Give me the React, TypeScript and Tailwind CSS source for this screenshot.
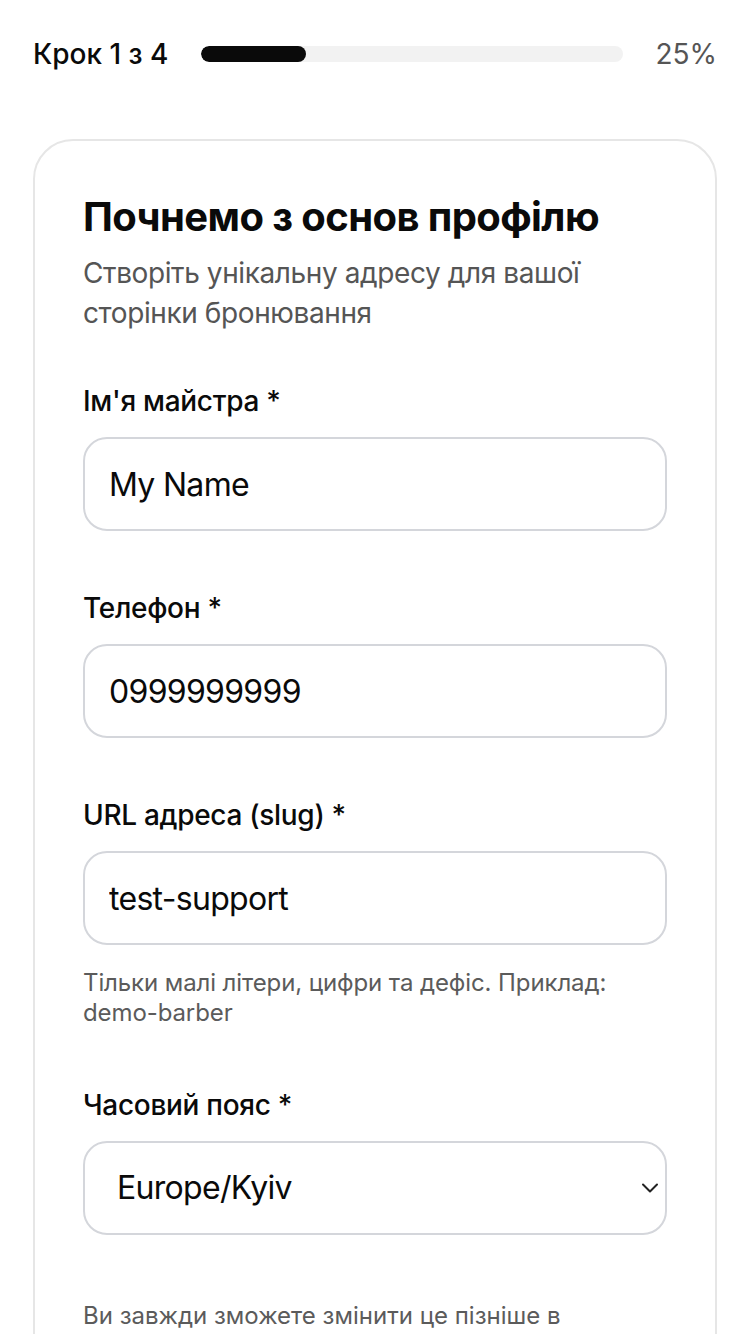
import React from 'react';

const labelCls = "block text-[28px] leading-[40px] font-medium text-[#0a0a0a] tracking-[-0.3px]";
const inputCls = "mt-[16px] block w-full h-[94px] rounded-[24px] border-2 border-[#d4d6db] bg-white px-[24px] text-[32px] text-[#0a0a0a] tracking-[-0.7px] outline-none";

function Field({ label, value, hint }: { label: string; value: string; hint?: string }) {
  return (
    <div>
      <label className={labelCls}>{label}</label>
      <input type="text" value={value} readOnly className={inputCls} />
      {hint && (
        <p className="mt-[23px] text-[24px] leading-[30px] text-[#5b5b5b] tracking-[-0.1px]">{hint}</p>
      )}
    </div>
  );
}

export default function App() {
  return (
    <div className="min-h-screen bg-white font-['Inter',sans-serif] px-[33px] pt-[34px] pb-[40px]">
      {/* progress */}
      <div className="flex items-center gap-[32px]">
        <span className="text-[28px] leading-[40px] font-medium text-[#0a0a0a] whitespace-nowrap">Крок 1 з 4</span>
        <div className="flex-1 h-[16px] rounded-full bg-[#f2f2f2] overflow-hidden">
          <div className="h-full rounded-full bg-[#0a0a0a]" style={{ width: '25%' }}></div>
        </div>
        <span className="text-[28px] leading-[40px] text-[#555555]">25%</span>
      </div>

      {/* card */}
      <div className="mt-[65px] rounded-[40px] border-2 border-[#e6e6e6] bg-white px-[48px] pt-[48px] pb-[48px]">
        <h1 className="text-[40px] leading-[56px] font-bold text-[#0a0a0a] tracking-[-0.6px]">Почнемо з основ профілю</h1>
        <p className="mt-[8px] text-[28px] leading-[40px] text-[#555555] tracking-[-0.4px]">
          Створіть унікальну адресу для вашої сторінки бронювання
        </p>

        <div className="mt-[48px] flex flex-col gap-[57px]">
          <Field label="Ім'я майстра *" value="My Name" />
          <Field label="Телефон *" value="0999999999" />
          <Field
            label="URL адреса (slug) *"
            value="test-support"
            hint="Тільки малі літери, цифри та дефіс. Приклад: demo-barber"
          />
          <div>
            <label className={labelCls}>Часовий пояс *</label>
            <div className="relative mt-[16px]">
              <select
                defaultValue="Europe/Kyiv"
                className="block w-full h-[94px] appearance-none rounded-[24px] border-2 border-[#d4d6db] bg-white pl-[32px] pr-[60px] text-[32px] text-[#0a0a0a] tracking-[-0.7px] outline-none"
              >
                <option value="Europe/Kyiv">Europe/Kyiv</option>
                <option value="Europe/Warsaw">Europe/Warsaw</option>
                <option value="Europe/London">Europe/London</option>
              </select>
              <svg
                className="pointer-events-none absolute right-[8px] top-1/2 -translate-y-1/2"
                width="18"
                height="12"
                viewBox="0 0 18 12"
                fill="none"
              >
                <path d="M2 2.5 L9 9.5 L16 2.5" stroke="#222" strokeWidth="2" strokeLinecap="round" strokeLinejoin="round" />
              </svg>
            </div>
          </div>
        </div>

        <p className="mt-[65px] text-[24px] leading-[32px] text-[#5b5b5b]">
          Ви завжди зможете змінити це пізніше в налаштуваннях профілю.
        </p>

        <button className="mt-[48px] w-full h-[96px] rounded-[24px] bg-[#0a0a0a] text-white text-[32px] font-semibold">
          Далі
        </button>
      </div>
    </div>
  );
}
